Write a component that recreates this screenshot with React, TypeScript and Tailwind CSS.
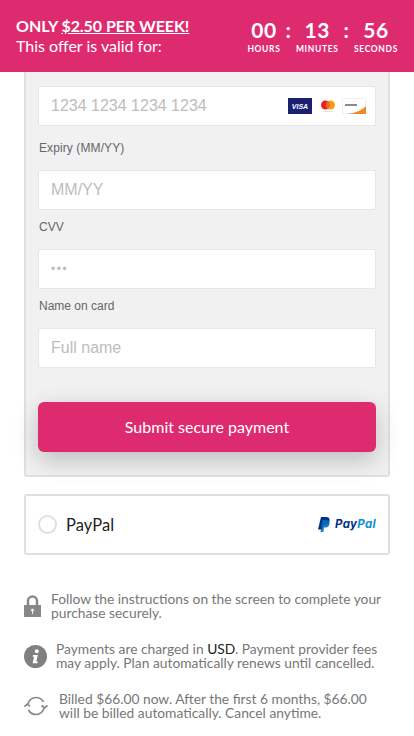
const Timer = ({ value, label }: { value: string; label: string }) => (
  <div className="flex flex-col items-center">
    <span className="text-[21px] leading-[24px] font-bold tracking-[0.5px]">{value}</span>
    <span className="text-[8.5px] leading-[10px] mt-[2px] font-bold tracking-[0.65px]">{label}</span>
  </div>
);

const Colon = () => <span className="text-[21px] leading-[24px] font-bold pb-[11px]">:</span>;

const Field = ({ placeholder, dots = false }: { placeholder: string; dots?: boolean }) => (
  <input
    readOnly
    placeholder={placeholder}
    className={`w-full h-10 bg-white border border-[#e6e6e6] rounded-[2px] px-3 outline-none placeholder:text-[#bdbdbd] ${dots ? 'text-xs tracking-[1.5px]' : 'text-base'}`}
  />
);

const CardLogos = () => (
  <div className="flex items-center">
    <div className="w-6 h-4 bg-[#1a1f71] flex items-center justify-center text-white text-[7px] font-bold italic leading-none">VISA</div>
    <svg width="20" height="16" viewBox="0 0 20 16" className="ml-[6px]">
      <circle cx="7.500" cy="7" r="4.500" fill="#e8202a" />
      <circle cx="12.500" cy="7" r="4.500" fill="#f79e1b" />
      <path d="M10 3.300a4.500 4.500 0 0 1 0 7.400a4.500 4.500 0 0 1 0-7.400z" fill="#f2641f" />
      <rect x="5" y="13" width="10" height="1" fill="#e2e2e2" />
    </svg>
    <svg width="24" height="16" viewBox="0 0 24 16" className="ml-1">
      <rect x="0.500" y="0.500" width="23" height="15" fill="#fff" stroke="#f0f0f0" />
      <rect x="3" y="6" width="12" height="2" fill="#8a8a8a" />
      <path d="M5 16C14 15 20 12 24 8v8z" fill="#ee8a2c" />
    </svg>
  </div>
);

const PayPalLogo = () => (
  <div className="flex items-center gap-[5px]">
    <svg width="12" height="15" viewBox="0 0 12 15">
      <path d="M3 0h5c3 0 4 1.600 3.500 4C11 7 9 8 6.500 8H5l-.8 4.500H0z" fill="#003087" />
      <path d="M4.500 3h3.500c3 0 4 1.500 3.500 4-.5 2.600-2.500 3.600-4.500 3.600H6L5.300 15H2.500z" fill="#0070ba" opacity="0.9" />
    </svg>
    <span className="text-[11.5px] leading-none font-bold italic tracking-[0.3px] text-[#003087]" style={{ fontFamily: 'Inter, sans-serif' }}>
      Pay<span className="text-[#0f8ecf]">Pal</span>
    </span>
  </div>
);

const LockIcon = () => (
  <svg width="17" height="24" viewBox="0 0 17 24" className="shrink-0 mt-[2px]">
    <path d="M4 12V7a4.500 4.500 0 0 1 9 0v5" fill="none" stroke="#888" strokeWidth="2.500" />
    <path d="M0 11h17v12H0z" fill="#888" />
    <circle cx="8.500" cy="16" r="1.500" fill="#eee" />
    <rect x="8" y="16" width="1" height="4" fill="#eee" />
  </svg>
);

const InfoIcon = () => (
  <svg width="23" height="23" viewBox="0 0 23 23" className="shrink-0 mt-[3px]">
    <circle cx="11.500" cy="11.500" r="11.500" fill="#808080" />
    <circle cx="12.800" cy="6.300" r="2" fill="#fff" />
    <path d="M9 10h4.800L12.300 16.500h1.600l-.5 1.800H8.600l1.500-6.500H8.600z" fill="#fff" />
  </svg>
);

const RenewIcon = () => (
  <svg width="24" height="22" viewBox="0 0 24 22" className="shrink-0 mt-[3px]" fill="none" stroke="#8a8a8a" strokeWidth="1.700">
    <path d="M3.500 10C5 5 8 2.500 12 2.500c3.400 0 6 1.700 7.500 4.500" />
    <path d="M20.500 12C19 17 16 19.500 12 19.500c-3.400 0-6-1.700-7.500-4.500" />
    <path d="M0.500 11.500 3.500 9 6 11.500" />
    <path d="M17.500 10.500 20.500 13 23.500 10.500" />
  </svg>
);

export default function App() {
  return (
    <div className="w-[414px] h-[736px] overflow-hidden bg-white" style={{ fontFamily: 'Lato, sans-serif' }}>
      <header className="h-[72px] bg-[#de2b6f] text-white flex items-center justify-between pl-4 pr-4">
        <div className="pb-[1px]">
          <p className="text-[16px] leading-[20px] font-bold tracking-[-0.05px]">
            ONLY <span className="underline">$2.50 PER WEEK!</span>
          </p>
          <p className="text-[16px] leading-[20px]">This offer is valid for:</p>
        </div>
        <div className="flex items-center gap-[5px] pb-[1px]">
          <Timer value="00" label="HOURS" />
          <Colon />
          <Timer value="13" label="MINUTES" />
          <Colon />
          <Timer value="56" label="SECONDS" />
        </div>
      </header>

      <main className="px-6">
        <section className="h-[405px] bg-[#f1f1f1] border-2 border-t-0 border-[#e0e0e0] rounded-b-[3px] px-3 pt-[14px]" style={{ fontFamily: '"Liberation Sans", sans-serif' }}>
          <div className="relative">
            <Field placeholder="1234 1234 1234 1234" />
            <div className="absolute right-[10px] top-3">
              <CardLogos />
            </div>
          </div>
          <label className="block text-xs leading-[14px] text-[#666] pl-[1px] pt-[15px] pb-[15px] tracking-[0.1px]">Expiry (MM/YY)</label>
          <Field placeholder="MM/YY" />
          <label className="block text-xs leading-[14px] text-[#666] pl-[1px] pt-[10px] pb-[15px]">CVV</label>
          <Field placeholder="•••" dots />
          <label className="block text-xs leading-[14px] text-[#666] pl-[1px] pt-[10px] pb-[15px]">Name on card</label>
          <Field placeholder="Full name" />
          <button
            className="mt-[34px] w-full h-[50px] bg-[#de2b6f] text-white text-base rounded-md shadow-[0_8px_24px_rgba(0,0,0,0.22)]"
            style={{ fontFamily: 'Lato, sans-serif' }}
          >
            Submit secure payment
          </button>
        </section>

        <section className="mt-[17px] h-[61px] border-2 border-[#e0e0e0] rounded-[3px] flex items-center justify-between pl-3 pr-3">
          <div className="flex items-center gap-[9px]">
            <div className="w-[19px] h-[19px] rounded-full border-2 border-[#e0e0e0]" />
            <span className="text-[16.5px] text-[#222] pt-[1px] tracking-[0.1px]">PayPal</span>
          </div>
          <PayPalLogo />
        </section>

        <div className="mt-[37px] flex flex-col gap-[22px] text-[13.8px] leading-[14px] text-[#777]">
          <div className="flex items-start gap-[10px]">
            <LockIcon />
            <p>Follow the instructions on the screen to complete your purchase securely.</p>
          </div>
          <div className="flex items-start gap-[9px]">
            <InfoIcon />
            <p>
              Payments are charged in <span className="text-[#222]">USD</span>. Payment provider fees may apply. Plan automatically renews until cancelled.
            </p>
          </div>
          <div className="flex items-start gap-[11px] pr-[10px]">
            <RenewIcon />
            <p>Billed $66.00 now. After the first 6 months, $66.00 will be billed automatically. Cancel anytime.</p>
          </div>
        </div>
      </main>
    </div>
  );
}
